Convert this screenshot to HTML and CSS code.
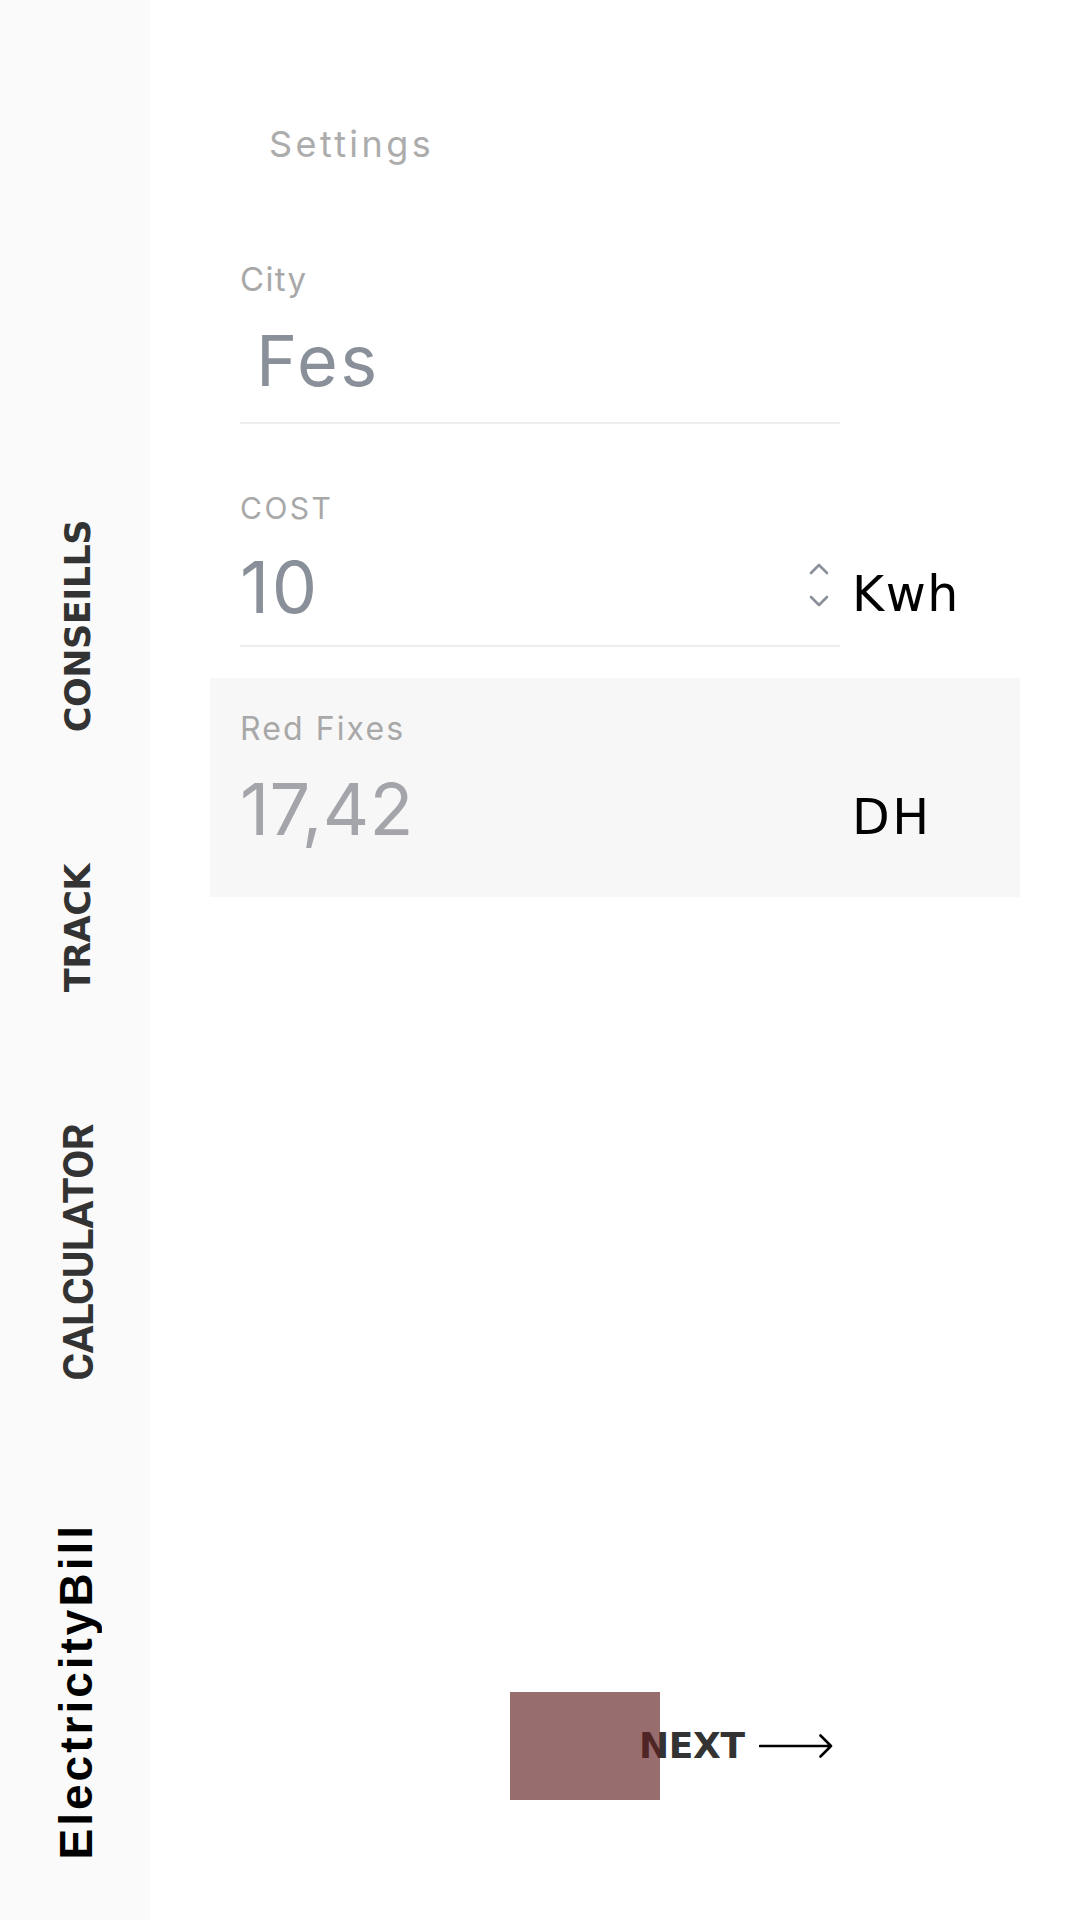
FILE: index.html
```html
<!DOCTYPE html>
<html lang="en">
<head>
<meta charset="utf-8">
<title>ElectricityBill – Settings</title>
<link rel="stylesheet" href="styles.css">
</head>
<body>
<div class="app">
  <nav class="sidebar">
    <div class="slot slot-a"><span class="vt nav">CONSEILLS</span></div>
    <div class="slot slot-b"><span class="vt nav">TRACK</span></div>
    <div class="slot slot-c"><span class="vt calc">CALCULATOR</span></div>
    <div class="slot slot-d"><span class="vt brand">ElectricityBill</span></div>
  </nav>
  <main class="main">
    <h1 class="title">Settings</h1>

    <div class="field city">
      <div class="label label-city">City</div>
      <div class="input input-city"><span class="value">Fes</span></div>
    </div>

    <div class="row cost">
      <div class="field">
        <div class="label label-cost">COST</div>
        <div class="input input-cost">
          <span class="value">10</span>
          <svg class="spinner" width="20" height="46" viewBox="0 0 20 46" aria-hidden="true">
            <polyline points="2,11 10,3 18,11" fill="none" stroke="#8a9099" stroke-width="2.6" stroke-linecap="round" stroke-linejoin="round"/>
            <polyline points="2,35 10,43 18,35" fill="none" stroke="#8a9099" stroke-width="2.6" stroke-linecap="round" stroke-linejoin="round"/>
          </svg>
        </div>
      </div>
      <div class="unit unit-cost">Kwh</div>
    </div>

    <div class="panel">
      <div class="field">
        <div class="label label-panel">Red Fixes</div>
        <div class="value value-panel">17,42</div>
      </div>
      <div class="unit unit-panel">DH</div>
    </div>

    <div class="footer">
      <span class="next">NEXT</span>
      <svg class="arrow" width="74" height="24" viewBox="0 0 74 24" aria-hidden="true">
        <path d="M1 12H72M61.5 1.5L72 12L61.5 22.5" fill="none" stroke="#000" stroke-width="2.6" stroke-linecap="round" stroke-linejoin="round"/>
      </svg>
      <div class="overlay"></div>
    </div>
  </main>
</div>
</body>
</html>
```

FILE: styles.css
```css
html, body {
  margin: 0;
  padding: 0;
  background: #ffffff;
}

body {
  width: 1080px;
  height: 1920px;
  overflow: hidden;
  font-family: Inter, "Noto Sans", sans-serif;
}

.app {
  display: flex;
  width: 1080px;
  height: 1920px;
}

/* ---------- sidebar ---------- */
.sidebar {
  width: 150px;
  flex: 0 0 150px;
  height: 1920px;
  overflow: hidden;
  background: #fafafa;
  display: flex;
  flex-direction: column;
  padding-top: 500px;
  box-sizing: border-box;
}

.slot {
  flex-shrink: 0;
  display: flex;
  flex-direction: column;
  justify-content: center;
  align-items: flex-start;
}

.slot-a { height: 252px; padding-left: 61px; }
.slot-b { height: 352px; padding-left: 61px; }
.slot-c { height: 297px; padding-left: 58px; }
.slot-d { height: 580px; padding-left: 53px; }

.vt {
  writing-mode: vertical-rl;
  text-orientation: sideways;
  transform: rotate(180deg);
  white-space: nowrap;
  line-height: 1;
}

.nav {
  font-family: "DejaVu Sans", Inter, sans-serif;
  font-weight: 700;
  font-size: 35px;
  letter-spacing: -0.5px;
  color: #333333;
}

.calc {
  font-family: Roboto, "Liberation Sans", sans-serif;
  font-weight: 700;
  font-size: 42px;
  letter-spacing: -0.6px;
  color: #333333;
}

.brand {
  font-family: "Liberation Sans", Arial, sans-serif;
  font-weight: 700;
  font-size: 46px;
  letter-spacing: 3px;
  color: #000000;
}

/* ---------- main ---------- */
.main {
  flex: 1;
  padding-left: 60px;
  display: flex;
  flex-direction: column;
  align-items: flex-start;
}

.title {
  margin: 122px 0 0 59px;
  font-size: 36px;
  line-height: 44px;
  font-weight: 400;
  letter-spacing: 3.4px;
  color: #acacac;
}

.field {
  width: 600px;
  display: flex;
  flex-direction: column;
}

.city {
  margin-top: 93px;
  margin-left: 30px;
}

.label {
  font-weight: 400;
  color: #a8a8a8;
}

.label-city {
  font-size: 33px;
  line-height: 40px;
  letter-spacing: 1.3px;
}

.input {
  display: flex;
  align-items: flex-start;
  border-bottom: 2px solid #eeeeee;
}

.input-city {
  margin-top: 22px;
  padding: 0 0 21px 16px;
}

.value {
  font-size: 72px;
  line-height: 80px;
  font-weight: 400;
  color: #8a9099;
}

.input-city .value {
  font-size: 70px;
  letter-spacing: 2.5px;
}

.row {
  display: flex;
  align-items: flex-start;
}

.cost {
  margin-top: 66px;
  margin-left: 30px;
}

.label-cost {
  font-size: 30px;
  line-height: 36px;
  letter-spacing: 2.5px;
}

.input-cost {
  margin-top: 20.5px;
  padding-bottom: 18.5px;
}

.input-cost .value {
  letter-spacing: 2.5px;
}

.spinner {
  margin-left: auto;
  margin-right: 11px;
  margin-top: 15.5px;
}

.unit {
  font-family: "DejaVu Sans", Inter, sans-serif;
  font-size: 49px;
  line-height: 56px;
  font-weight: 400;
  letter-spacing: 1.5px;
  color: #000000;
  margin-left: 12px;
}

.unit-cost {
  margin-top: 76.8px;
}

/* ---------- panel ---------- */
.panel {
  margin-top: 31px;
  width: 810px;
  box-sizing: border-box;
  background: #f7f7f7;
  padding: 31px 0 48px 30px;
  display: flex;
  align-items: flex-start;
}

.label-panel {
  font-size: 32px;
  line-height: 40px;
  letter-spacing: 2.1px;
}

.value-panel {
  margin-top: 19.7px;
  letter-spacing: 0.3px;
  color: #a4a5aa;
}

.unit-panel {
  margin-top: 81px;
  letter-spacing: 2.5px;
}

/* ---------- footer ---------- */
.footer {
  position: relative;
  margin-top: 827.6px;
  margin-left: 429px;
  display: flex;
  align-items: center;
  height: 44px;
}

.next {
  font-family: "DejaVu Sans", Inter, sans-serif;
  font-size: 36px;
  line-height: 44px;
  font-weight: 700;
  letter-spacing: -0.3px;
  color: #333333;
}

.arrow {
  margin-left: 14px;
}

.overlay {
  position: absolute;
  left: -129px;
  top: -32.6px;
  width: 150px;
  height: 108px;
  background: rgba(96, 31, 31, 0.65);
}
```
